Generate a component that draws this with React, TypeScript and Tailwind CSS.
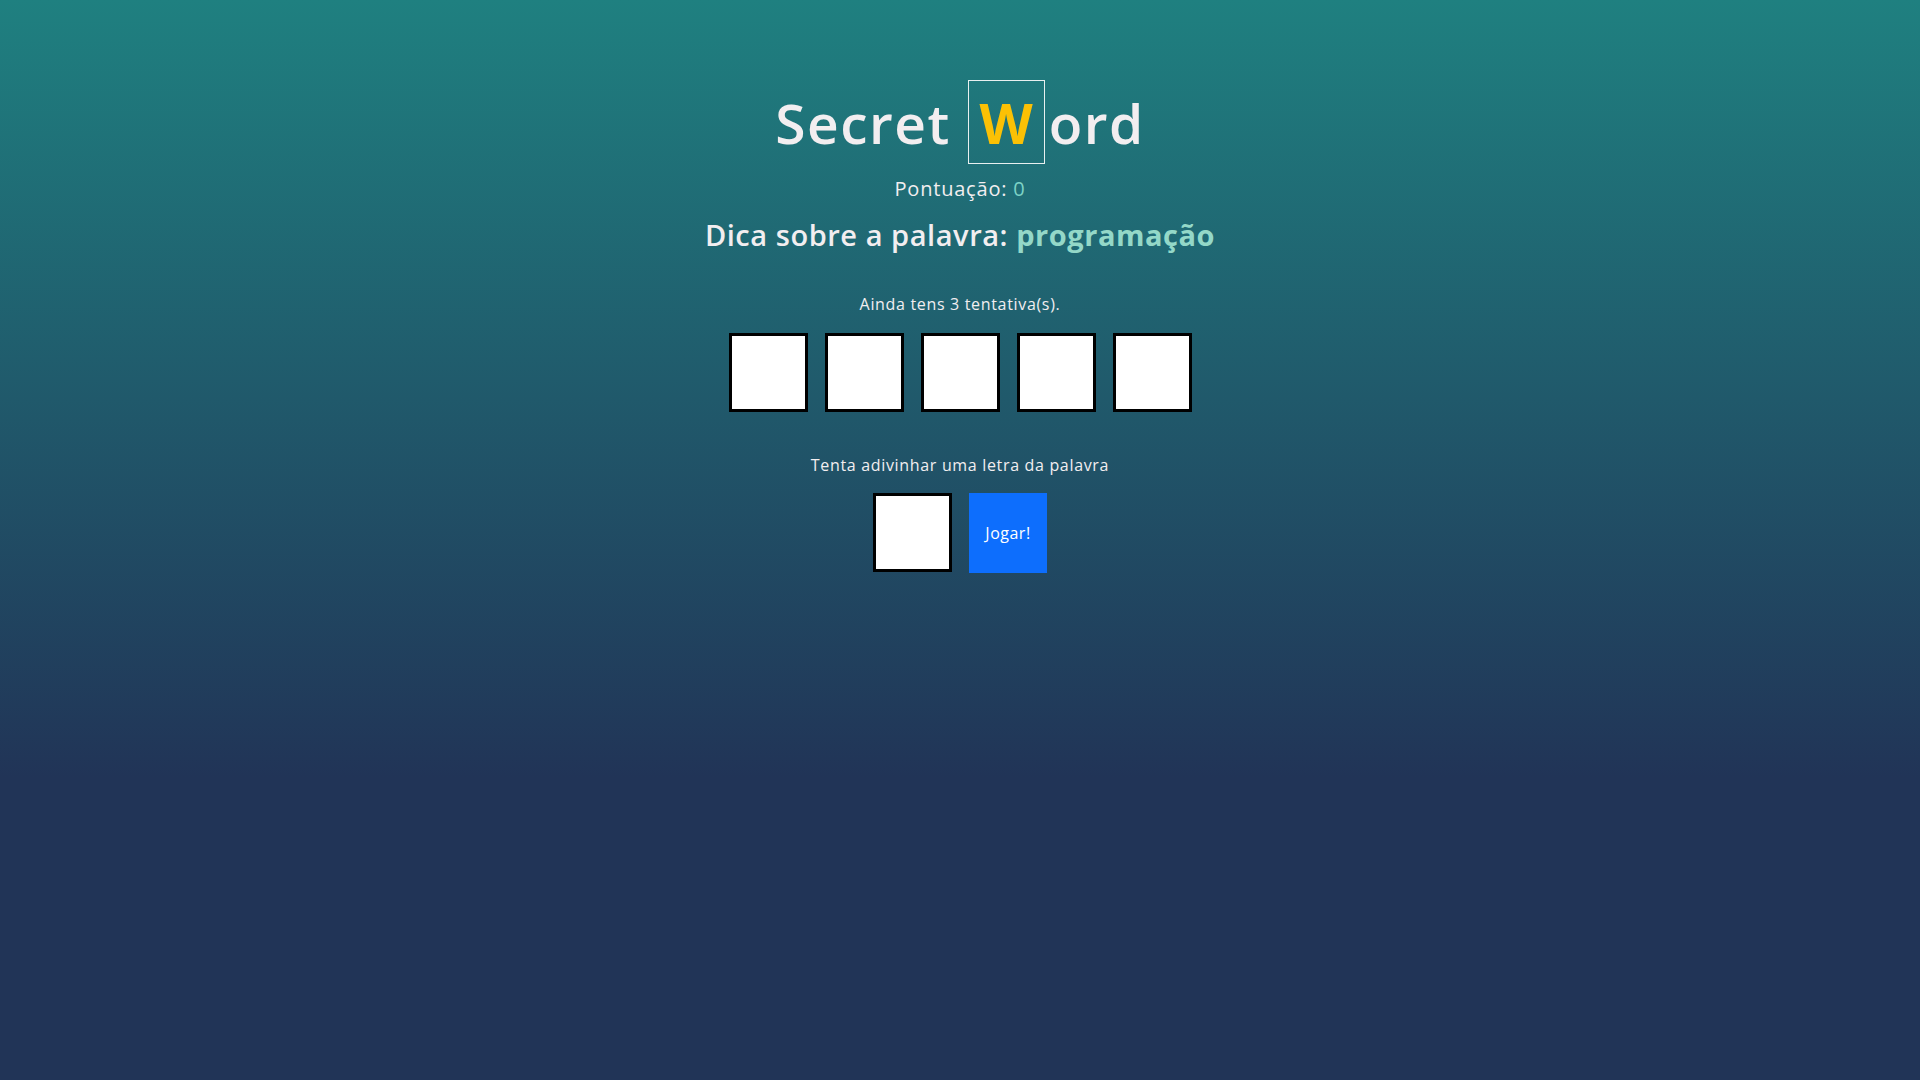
import React from "react";

export default function App() {
  const letters = [0, 1, 2, 3, 4];
  return (
    <div
      className="min-h-screen w-full flex flex-col items-center pt-[80px] text-[#f2eef0] bg-[linear-gradient(180deg,#1f8080_0%,#213457_72%,#213457_100%)]"
      style={{ fontFamily: '"Open Sans", "Liberation Sans", sans-serif' }}
    >
      <h1 className="flex items-center h-[84px] text-[55px] font-semibold leading-none tracking-[1.5px]">
        <span>Secret</span>
        <span className="ml-[17px] w-[77px] h-[84px] border border-[#e8f0f0] flex items-center justify-center text-[#fbc105] font-bold tracking-normal">
          W
        </span>
        <span className="ml-[4px]">ord</span>
      </h1>
      <p className="mt-[11px] h-[28px] leading-[28px] text-[20px] tracking-[0.8px]">
        Pontuação: <span className="text-[#7dd3c6]">0</span>
      </p>
      <h3 className="mt-[12px] h-[40px] leading-[40px] text-[29px] font-semibold tracking-[0.55px]">
        Dica sobre a palavra: <span className="text-[#94d8c8] font-bold">programação</span>
      </h3>
      <p className="mt-[37px] h-[24px] leading-[24px] text-[16px] tracking-[0.67px]">Ainda tens 3 tentativa(s).</p>
      <div className="mt-[17px] flex gap-[17px]">
        {letters.map((i) => (
          <div key={i} className="w-[79px] h-[79px] bg-white border-[3px] border-black" />
        ))}
      </div>
      <p className="mt-[41px] h-[24px] leading-[24px] text-[16px] tracking-[0.67px]">Tenta adivinhar uma letra da palavra</p>
      <form className="mt-[16px] flex gap-[17px]" onSubmit={(e) => e.preventDefault()}>
        <input
          type="text"
          maxLength={1}
          className="w-[79px] h-[79px] bg-white border-[3px] border-black outline-none text-black text-center text-[40px]"
        />
        <button
          type="submit"
          className="w-[78px] h-[80px] bg-[#0d6efd] text-white text-[16px] font-medium tracking-[0.5px]"
        >
          Jogar!
        </button>
      </form>
    </div>
  );
}
